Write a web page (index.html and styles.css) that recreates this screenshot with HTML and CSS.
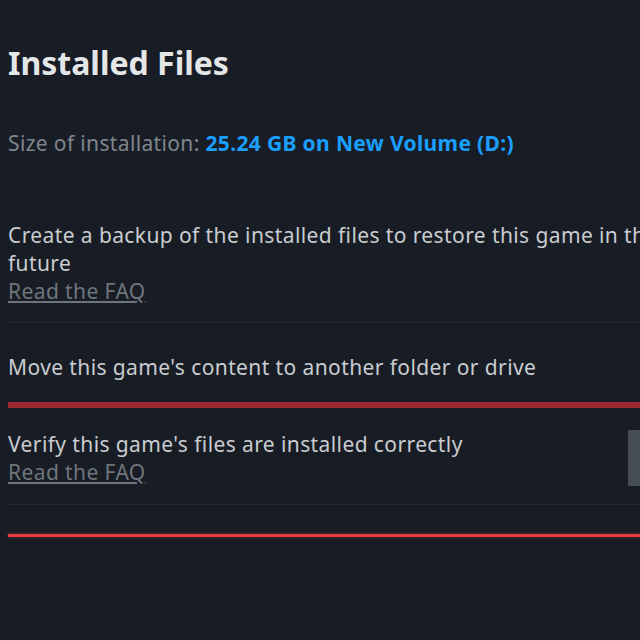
FILE: index.html
```html
<!DOCTYPE html>
<html lang="en">
<head>
    <meta charset="UTF-8">
    <title>Installed Files</title>
    <link rel="stylesheet" href="styles.css">
</head>
<body>
    <div class="page">
        <h1 class="title">Installed Files</h1>
        <p class="size">Size of installation: <span class="size-value">25.24 GB on New Volume (D:)</span></p>

        <div class="row row-backup">
            <div class="row-text">
                <p>Create a backup of the installed files to restore this game in the future</p>
                <a class="faq" href="#">Read the FAQ</a>
            </div>
            <button class="row-btn btn-backup">Backup game files</button>
        </div>

        <div class="row row-move">
            <div class="row-text">
                <p>Move this game's content to another folder or drive</p>
            </div>
            <button class="row-btn btn-move">Move install folder</button>
        </div>

        <div class="row row-verify">
            <div class="row-text">
                <p>Verify this game's files are installed correctly</p>
                <a class="faq" href="#">Read the FAQ</a>
            </div>
            <button class="row-btn btn-verify">Verify integrity of game files</button>
        </div>

        <div class="mark"></div>
    </div>
</body>
</html>
```

FILE: styles.css
```css
body {
    margin: 0;
    background-color: #181d25;
    font-family: 'Noto Sans', 'Liberation Sans', sans-serif;
    color: #d6d8db;
    overflow: hidden;
    height: 640px;
}

.page {
    width: 900px;
    padding: 38px 0 0 8px;
}

.title {
    margin: 0;
    font-size: 32px;
    line-height: 50px;
    font-weight: 700;
    color: #e4e6e8;
}

.size {
    margin: 41px 0 0 0;
    font-size: 21px;
    line-height: 28px;
    letter-spacing: 0.35px;
    color: #7f858d;
}

.size-value {
    color: #1a9fff;
    font-weight: 700;
}

.row {
    display: flex;
    align-items: center;
    gap: 24px;
    border-bottom: 1px solid #23282f;
}

.row-text {
    flex: 1;
}

.row-text p {
    margin: 0;
    font-size: 21px;
    line-height: 28px;
    letter-spacing: 0.4px;
    color: #c9ccd0;
}

.faq {
    display: block;
    width: max-content;
    font-size: 21px;
    line-height: 28px;
    letter-spacing: 0.4px;
    color: #6f757d;
    text-decoration: underline;
}

.row-backup {
    margin-top: 64px;
    padding: 0 0 17px 0;
}

.row-move {
    padding: 16px 0 7px 0;
    border-bottom: 6px solid #9a2a2f;
}

.row-verify {
    padding: 22px 0 18px 0;
}

.row-btn {
    height: 56px;
    border: none;
    background-color: #474d57;
    color: #e4e6e8;
    font-family: 'Noto Sans', 'Liberation Sans', sans-serif;
    font-size: 16px;
    padding: 0 20px;
}

.btn-backup {
    width: 200px;
}

.btn-move {
    width: 230px;
}

.btn-verify {
    width: 280px;
}

.mark {
    margin-top: 29px;
    height: 3px;
    background-color: #e23a3f;
    box-shadow: 0 0 3px rgba(226, 58, 63, 0.6);
}
```
